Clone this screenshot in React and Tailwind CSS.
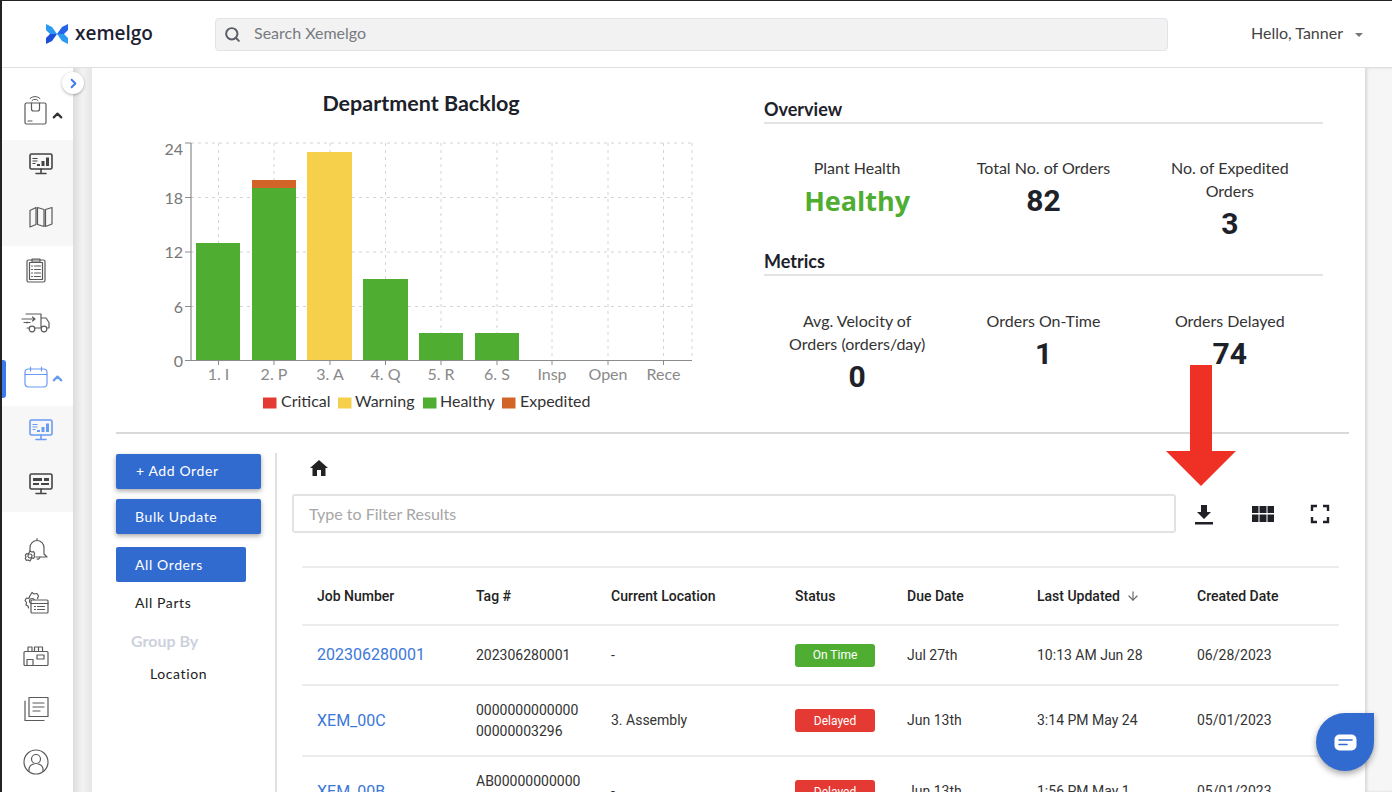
import React from 'react';
import { Search, ChevronRight, ChevronUp, ArrowDown } from 'lucide-react';

const NavIcon = ({ children, color = '#5a5a5a', w = 34, h = 34, vb = '0 0 34 34' }) => (
    <svg width={w} height={h} viewBox={vb} fill="none" stroke={color} strokeWidth="1.2" strokeLinecap="round" strokeLinejoin="round">
        {children}
    </svg>
);

const BoxIcon = () => (
    <NavIcon w={28} h={32} vb="0 0 28 32">
        <path d="M9 4.500a7 7 0 0 1 10 0M11 6.500a4 4 0 0 1 6 0" strokeWidth="1" />
        <rect x="4" y="9" width="21" height="21" rx="1.500" />
        <path d="M10.500 9v6a2 2 0 0 0 2 2h4a2 2 0 0 0 2-2V9M7 27h4" />
    </NavIcon>
);

const MonitorIcon = ({ color = '#444', fill = '#444', dash = false }) => (
    <NavIcon color={color} w={26} h={24} vb="0 0 26 24">
        <rect x="2" y="2" width="22" height="15" rx="1.500" strokeWidth="1.600" />
        <path d="M13 17v4M8 21.500h10" strokeWidth="1.600" />
        {dash ? (
            <path d="M5 6h9v3H5zM16 6h5v3h-5zM5 11h6v2H5zM13 11h8v2h-8z" fill={fill} stroke="none" />
        ) : (
            <path d="M9 14h3v-2H9zM13.500 14h3V9h-3zM18 14h3V5.500h-3z M4.500 6h5v1h-5zM4.500 8.500h5v1h-5zM4.500 11h3v1h-3z" fill={fill} stroke="none" />
        )}
    </NavIcon>
);

const MapIcon = () => (
    <NavIcon w={26} h={24} vb="0 0 26 24">
        <path d="M2 5.500 8 2.500v17l-6 2.500zM9.500 2.500l6.500 2v17l-6.500-2zM17.500 4.500 24 2.500v16.500l-6.500 2.500z" strokeWidth="1.200" />
    </NavIcon>
);

const ClipboardIcon = () => (
    <NavIcon w={22} h={26} vb="0 0 22 26">
        <rect x="2" y="3" width="18" height="22" rx="1.500" />
        <rect x="4.500" y="5.500" width="13" height="17" />
        <path d="M7 2h8v3H7zM6.500 9h1M9.500 9h6M6.500 12.500h1M9.500 12.500h6M6.500 16h1M9.500 16h6M6.500 19.500h1M9.500 19.500h6" />
    </NavIcon>
);

const TruckIcon = () => (
    <NavIcon w={30} h={22} vb="0 0 30 22">
        <path d="M5 2h15v13M20 6h5l3 4.500V16h-2M8 16H6M14 16h6M6 11v-1M1 7h13l-2.500-2M14 7l-2.500 2M3 10.500h6" />
        <circle cx="11" cy="17" r="2.800" />
        <circle cx="23" cy="17" r="2.800" />
    </NavIcon>
);

const CalendarIcon = () => (
    <NavIcon color="#6a9bf4" w={24} h={22} vb="0 0 24 22">
        <rect x="1" y="3" width="22" height="18" rx="3.500" />
        <path d="M1 8.500h22M6.500 1v4M17.500 1v4" />
    </NavIcon>
);

const BellIcon = () => (
    <NavIcon w={28} h={28} vb="0 0 28 28">
        <path d="M15 2.500v1.500M8 15v-3.500a7 7 0 0 1 14 0V18l3 3H14" />
        <path d="M18 21a2.500 2.500 0 0 1-3 2" />
        <circle cx="8" cy="20" r="2" />
        <path d="M8 15l1.700 1 2-.3 1 1.800-.7 1.500.7 1.500-1 1.800-2-.3L8 25l-1.700-1-2 .3-1-1.800.7-1.500-.7-1.500 1-1.800 2 .3z" />
    </NavIcon>
);

const GearListIcon = () => (
    <NavIcon w={26} h={24} vb="0 0 26 24">
        <path d="M9 1.500l2 1.500 3-.5 1.500 2.500-1 2.500M5.500 17l-.5-2-2-1 .5-2.500L2 9.500l1.500-2.500 2.500.3.800-2.300L9 1.500" />
        <circle cx="9" cy="10" r="2.500" />
        <rect x="8" y="9" width="17" height="13" rx="1" fill="#fff" />
        <path d="M8 12.500h17M11.500 15.500h1M14.500 15.500h7M11.500 18.500h1M14.500 18.500h7" />
    </NavIcon>
);

const FactoryIcon = () => (
    <NavIcon w={26} h={22} vb="0 0 26 22">
        <rect x="1" y="6.500" width="24" height="14" rx="1" />
        <path d="M5 6.500V2h4v4.500M11.500 6.500V2h4v4.500M15.500 6.500V2h4v4.500" />
        <path d="M4 20.500v-6h6v6M14 10h7v4h-7z" />
    </NavIcon>
);

const ListIcon = () => (
    <NavIcon w={26} h={26} vb="0 0 26 26">
        <rect x="6" y="1.500" width="19" height="19" />
        <path d="M10 7h11M10 11h11M10 15h7M2 5v19.500h19" />
    </NavIcon>
);

const PersonIcon = () => (
    <NavIcon w={26} h={26} vb="0 0 26 26">
        <circle cx="13" cy="13" r="12" />
        <circle cx="13" cy="10" r="4.500" />
        <path d="M6 22.500v-3a6 6 0 0 1 5-4.500M20 22.500v-3a6 6 0 0 0-5-4.500" />
    </NavIcon>
);

const NavRow = ({ children, className = '' }) => (
    <div className={`h-[53px] flex items-center justify-center shrink-0 ${className}`}>{children}</div>
);

const Sidebar = () => (
    <div className="relative w-[71px] shrink-0 bg-white flex flex-col">
        <div className="h-[72px] pt-[26px] pl-[19px] flex items-start gap-[1px]">
            <BoxIcon />
            <ChevronUp size={15} strokeWidth={3.5} className="mt-[14px] text-[#333]" />
        </div>
        <div className="bg-[#f7f7f7]">
            <NavRow className="pl-[7px] pb-[5px]"><MonitorIcon /></NavRow>
            <NavRow className="pl-[7px] pb-[5px]"><MapIcon /></NavRow>
        </div>
        <NavRow className="pr-[3px] pb-[5px]"><ClipboardIcon /></NavRow>
        <NavRow className="pr-[3px] pb-[5px]"><TruckIcon /></NavRow>
        <NavRow className="relative h-[54px] pl-[13px] pb-[5px] gap-[2px]">
            <div className="absolute left-0 top-[8px] w-[4px] h-[38px] bg-[#3b78f0] rounded-r-[3px]"></div>
            <CalendarIcon />
            <ChevronUp size={15} strokeWidth={3.5} className="mt-[4px] text-[#6a9bf4]" />
        </NavRow>
        <div className="bg-[#f7f7f7]">
            <NavRow className="pl-[7px] pb-[5px]"><MonitorIcon color="#6a9bf4" fill="#6a9bf4" /></NavRow>
            <NavRow className="pl-[7px] pb-[4px]"><MonitorIcon dash /></NavRow>
        </div>
        <div className="h-[12px] shrink-0"></div>
        <NavRow className="pr-[3px] pb-[1px]"><BellIcon /></NavRow>
        <NavRow className="pr-[3px] pb-[1px]"><GearListIcon /></NavRow>
        <NavRow className="pr-[3px] pb-[1px]"><FactoryIcon /></NavRow>
        <NavRow className="pr-[3px] pb-[1px]"><ListIcon /></NavRow>
        <NavRow className="pr-[3px] pb-[1px]"><PersonIcon /></NavRow>
        <div className="absolute left-[60px] top-[4px] w-[22px] h-[22px] rounded-full bg-white shadow-[0_1px_3px_rgba(0,0,0,0.3)] flex items-center justify-center z-10">
            <ChevronRight size={15} strokeWidth={3} className="text-[#3b78f0]" />
        </div>
    </div>
);

const Header = () => (
    <div className="h-[67px] shrink-0 bg-white border-b border-[#e0e0e0] flex items-center pl-[44px] pr-[29px]">
        <div className="w-[169px] flex items-center shrink-0">
            <svg width="22" height="22" viewBox="0 0 22 22">
                <polygon points="0,1 6,4 11,11 4,11 0,7" fill="#2c9af0" />
                <polygon points="0,21 6,18 11,11 4,11 0,15" fill="#1d4ed8" />
                <polygon points="22,1 16,4 11,11 18,11 22,7" fill="#2563eb" />
                <polygon points="22,21 16,18 11,11 18,11 22,15" fill="#2c9af0" />
            </svg>
            <span className="ml-[7px] pb-[2px] text-[19px] leading-none font-semibold text-[#1d2233] font-['Open_Sans',sans-serif]">xemelgo</span>
        </div>
        <div className="w-[953px] h-[33px] shrink-0 bg-[#f2f2f3] border border-[#e1e3e8] rounded-[4px] flex items-center pl-[8px] gap-[13px]">
            <Search size={17} strokeWidth={2.8} className="text-[#5a5f66]" />
            <span className="text-[16px] pb-[2px] text-[#777b80]">Search Xemelgo</span>
        </div>
        <div className="ml-auto flex items-center gap-[12px]">
            <span className="text-[16px] pb-[2px] text-[#444]">Hello, Tanner</span>
            <div className="w-0 h-0 border-x-[4px] border-x-transparent border-t-[4px] border-t-[#777] mt-[2px]"></div>
        </div>
    </div>
);

const bars = [
    { x: 196, w: 44, top: 243, c: '#4fae32' },
    { x: 252, w: 44, top: 188, c: '#4fae32' },
    { x: 252, w: 44, top: 180, h: 8, c: '#d36428' },
    { x: 307, w: 45, top: 152, c: '#f6d04a' },
    { x: 363, w: 45, top: 279, c: '#4fae32' },
    { x: 419, w: 44, top: 333, c: '#4fae32' },
    { x: 475, w: 44, top: 333, c: '#4fae32' },
];

const BacklogChart = () => {
    const yTicks = [[24, 143], [18, 197.5], [12, 252], [6, 306.5], [0, 360.5]];
    const xTicks = [['1. I', 218.5], ['2. P', 274], ['3. A', 330], ['4. Q', 385.5], ['5. R', 441], ['6. S', 497], ['Insp', 552], ['Open', 608], ['Rece', 663.5]];
    const legend = [
        ['Critical', 263, 281, '#e53a33'],
        ['Warning', 338, 355, '#f6d04a'],
        ['Healthy', 423, 440, '#4fae32'],
        ['Expedited', 502, 520, '#d36428'],
    ];
    // viewBox uses page coordinates so the numbers can be read off the screenshot
    return (
        <svg width="560" height="285" viewBox="150 130 560 285" className="block">
            {yTicks.slice(0, 4).map(([v, y]) => (
                <line key={v} x1="191" x2="692" y1={y} y2={y} stroke="#d4d4d4" strokeDasharray="3 4" />
            ))}
            {xTicks.map(([l, x]) => (
                <line key={l} x1={x} x2={x} y1="143" y2="360" stroke="#d4d4d4" strokeDasharray="3 4" />
            ))}
            <line x1="692" x2="692" y1="143" y2="360" stroke="#d4d4d4" strokeDasharray="3 4" />
            {bars.map((b, i) => (
                <rect key={i} x={b.x} y={b.top} width={b.w} height={b.h || 360 - b.top} fill={b.c} />
            ))}
            <line x1="191" x2="191" y1="143" y2="361" stroke="#8c8c8c" strokeWidth="1.2" />
            <line x1="185" x2="692" y1="360.5" y2="360.5" stroke="#8c8c8c" strokeWidth="1.2" />
            {yTicks.map(([v, y]) => (
                <g key={v}>
                    <line x1="185" x2="191" y1={y} y2={y} stroke="#8c8c8c" />
                    {/* the top label sits under its tick in the original chart */}
                    <text x="183" y={v === 24 ? y + 12 : y + 6} textAnchor="end" fontSize="16" fill="#777">{v}</text>
                </g>
            ))}
            {xTicks.map(([l, x]) => (
                <g key={l}>
                    <line x1={x} x2={x} y1="360" y2="365" stroke="#8c8c8c" />
                    <text x={x} y="380" textAnchor="middle" fontSize="16" fill="#8a8a8a">{l}</text>
                </g>
            ))}
            {legend.map(([l, rx, tx, c]) => (
                <g key={l}>
                    <rect x={rx} y="397.500" width="13.500" height="11" fill={c} />
                    <text x={tx} y="407" fontSize="16" fill="#333">{l}</text>
                </g>
            ))}
        </svg>
    );
};

const Stat = ({ label, value, green }) => (
    <div className="flex flex-col items-center text-center">
        <div className="text-[16px] leading-[23px] text-[#333] w-[170px]">{label}</div>
        <div className={`font-bold text-center leading-[34px] mt-[5px] ${green ? "text-[#4fae32] text-[27px] font-['Open_Sans',sans-serif]" : "text-[#1d2129] text-[30px] font-['Roboto',sans-serif]"}`}>{value}</div>
    </div>
);

const OverviewPanel = () => (
    <div className="w-[559px] pt-[30px]">
        <div className="text-[18px] leading-[22px] font-bold text-[#1d2129] border-b-2 border-[#e4e4e4] pb-[2px]">Overview</div>
        <div className="grid grid-cols-3 pt-[32px] h-[126px]">
            <Stat label="Plant Health" value="Healthy" green />
            <Stat label="Total No. of Orders" value="82" />
            <Stat label={<>No. of Expedited<br />Orders</>} value="3" />
        </div>
        <div className="text-[18px] leading-[22px] font-bold text-[#1d2129] border-b-2 border-[#e4e4e4] pb-[2px]">Metrics</div>
        <div className="grid grid-cols-3 pt-[33px]">
            <Stat label={<>Avg. Velocity of<br />Orders (orders/day)</>} value="0" />
            <Stat label="Orders On-Time" value="1" />
            <Stat label="Orders Delayed" value="74" />
        </div>
    </div>
);

const SideNav = () => (
    <div className="w-[159px] shrink-0 pt-[20px] flex flex-col">
        <button className="w-[145px] h-[35px] bg-[#326bcf] rounded-[2px] text-white text-[14px] tracking-[0.6px] text-left pl-[20px] pb-[2px] shadow-[0_2px_5px_rgba(0,0,0,0.35)]">+ Add Order</button>
        <button className="w-[145px] h-[35px] mt-[10px] bg-[#326bcf] rounded-[2px] text-white text-[14px] tracking-[0.6px] text-left pl-[19px] pb-[1px] shadow-[0_2px_5px_rgba(0,0,0,0.35)]">Bulk Update</button>
        <div className="w-[130px] h-[35px] mt-[13px] bg-[#326bcf] rounded-[2px] text-white text-[14px] tracking-[0.6px] pl-[19px] pb-[1px] flex items-center">All Orders</div>
        <div className="mt-[12px] pl-[19px] text-[14px] leading-[18px] tracking-[0.6px] text-[#222]">All Parts</div>
        <div className="mt-[20px] pl-[15px] text-[16px] leading-[18px] font-bold text-[#cdd1dc]">Group By</div>
        <div className="mt-[15px] pl-[34px] text-[14px] leading-[18px] tracking-[0.6px] text-[#222]">Location</div>
    </div>
);

const colClass = 'grid grid-cols-[159px_135px_184px_112px_130px_160px_1fr] items-center pl-[15px] border-b-2 border-[#ececec]';

const StatusBadge = ({ status }) => (
    <div className={`w-[80px] h-[23px] rounded-[3px] flex items-center justify-center text-white text-[12px] ${status === 'On Time' ? 'bg-[#4fae32]' : 'bg-[#e53a33]'}`}>
        {status}
    </div>
);

const rows = [
    { job: '202306280001', tag: ['202306280001'], loc: '-', status: 'On Time', due: 'Jul 27th', upd: '10:13 AM Jun 28', created: '06/28/2023', h: 'h-[60px]' },
    { job: 'XEM_00C', tag: ['0000000000000', '00000003296'], loc: '3. Assembly', status: 'Delayed', due: 'Jun 13th', upd: '3:14 PM May 24', created: '05/01/2023', h: 'h-[71px]' },
    { job: 'XEM_00B', tag: ['AB00000000000', ''], loc: '-', status: 'Delayed', due: 'Jun 13th', upd: '1:56 PM May 1', created: '05/01/2023', h: 'h-[71px]' },
];

const OrdersTable = () => (
    <div className="ml-[25px] w-[1037px] mt-[33px] border-t-2 border-[#ececec] font-['Roboto',sans-serif] text-[14px] text-[#333]">
        <div className={`${colClass} h-[58px] font-medium text-[#222]`}>
            <div>Job Number</div>
            <div>Tag #</div>
            <div>Current Location</div>
            <div>Status</div>
            <div>Due Date</div>
            <div className="flex items-center gap-[6px]">Last Updated <ArrowDown size={14} className="text-[#666]" /></div>
            <div>Created Date</div>
        </div>
        {rows.map((r) => (
            <div key={r.job} className={`${colClass} ${r.h}`}>
                <div className="text-[16px] text-[#3b78d8]">{r.job}</div>
                <div className="leading-[21px]">
                    {r.tag.map((t, i) => <div key={i} className="min-h-[21px]">{t}</div>)}
                </div>
                <div>{r.loc}</div>
                <StatusBadge status={r.status} />
                <div>{r.due}</div>
                <div>{r.upd}</div>
                <div>{r.created}</div>
            </div>
        ))}
    </div>
);

const Toolbar = () => (
    <div className="flex items-center mt-[17px] ml-[15px]">
        <div className="w-[884px] h-[39px] border-2 border-[#e2e2e2] rounded-[3px] pl-[15px] flex items-center text-[16px] text-[#a6a6a6]">
            Type to Filter Results
        </div>
        <svg width="24" height="24" viewBox="0 0 24 24" fill="#1f2126" className="ml-[16px]">
            <path d="M19 10h-4V3H9v7H5l7 7zM3 20h18v2.500H3z" />
        </svg>
        <svg width="24" height="18" viewBox="0 0 24 18" fill="#1f2126" className="ml-[35px]">
            <path d="M1 1h6.500v7H1zM8.500 1h7v7h-7zM16.500 1H23v7h-6.500zM1 9.500h6.500V17H1zM8.500 9.500h7V17h-7zM16.500 9.500H23V17h-6.500z" />
        </svg>
        <svg width="20" height="20" viewBox="0 0 20 20" fill="none" stroke="#1f2126" strokeWidth="2.400" className="ml-[35px]">
            <path d="M2 7V2h5M13 2h5v5M18 13v5h-5M7 18H2v-5" />
        </svg>
    </div>
);

const App = () => (
    <div className="relative w-[1392px] h-[792px] overflow-hidden bg-white border-l-2 border-t border-[#222] flex flex-col font-['Lato',sans-serif]">
        <Header />
        <div className="flex flex-1 min-h-0">
            <Sidebar />
            <div className="w-[19px] shrink-0 bg-gradient-to-r from-[#dcdcdc] via-[#f3f3f3] to-[#e6e6e6]"></div>
            <div className="w-[1273px] shrink-0 bg-white pl-[24px] overflow-hidden">
                <div className="w-[1233px] h-[366px] border-b-2 border-[#d9d9d9] flex relative">
                    <div className="w-[648px] shrink-0 flex flex-col">
                        <div className="text-[21.5px] leading-[24px] font-bold text-[#1d2129] text-center w-[610px] pt-[23px] h-[62px]">Department Backlog</div>
                        <div className="ml-[34px]"><BacklogChart /></div>
                    </div>
                    <OverviewPanel />
                </div>
                <div className="flex h-[400px]">
                    <SideNav />
                    <div className="w-[2px] mt-[19px] bg-[#e0e0e0] shrink-0"></div>
                    <div className="flex-1 min-w-0">
                        <svg width="20" height="18" viewBox="0 0 20 18" fill="#222" className="ml-[32px] mt-[25px]">
                            <path d="M8 17v-6h4v6h4.500v-8H19L10 1 1 9h2.500v8z" />
                        </svg>
                        <Toolbar />
                        <OrdersTable />
                    </div>
                </div>
            </div>
            <div className="flex-1 bg-[#f6f6f6] shadow-[inset_2px_0_3px_rgba(0,0,0,0.12)]"></div>
        </div>

        {/* annotation arrow added over the screenshot */}
        <div className="absolute left-[1164px] top-[364px] flex flex-col items-center z-20">
            <div className="w-[22px] h-[86px] bg-[#ee3124]"></div>
            <div className="w-0 h-0 border-x-[35px] border-x-transparent border-t-[35px] border-t-[#ee3124]"></div>
        </div>

        {/* chat launcher */}
        <div className="absolute left-[1314px] top-[712px] w-[58px] h-[58px] bg-[#326bcf] rounded-full rounded-tr-[6px] shadow-[0_3px_6px_rgba(0,0,0,0.35)] flex items-center justify-center z-20">
            <svg width="23" height="17" viewBox="0 0 23 17">
                <rect x="0.500" y="0.500" width="22" height="16" rx="5" fill="#fff" />
                <path d="M5 6h13M5 10.500h8" stroke="#326bcf" strokeWidth="1.600" strokeLinecap="round" />
            </svg>
        </div>
    </div>
);

export default App;
